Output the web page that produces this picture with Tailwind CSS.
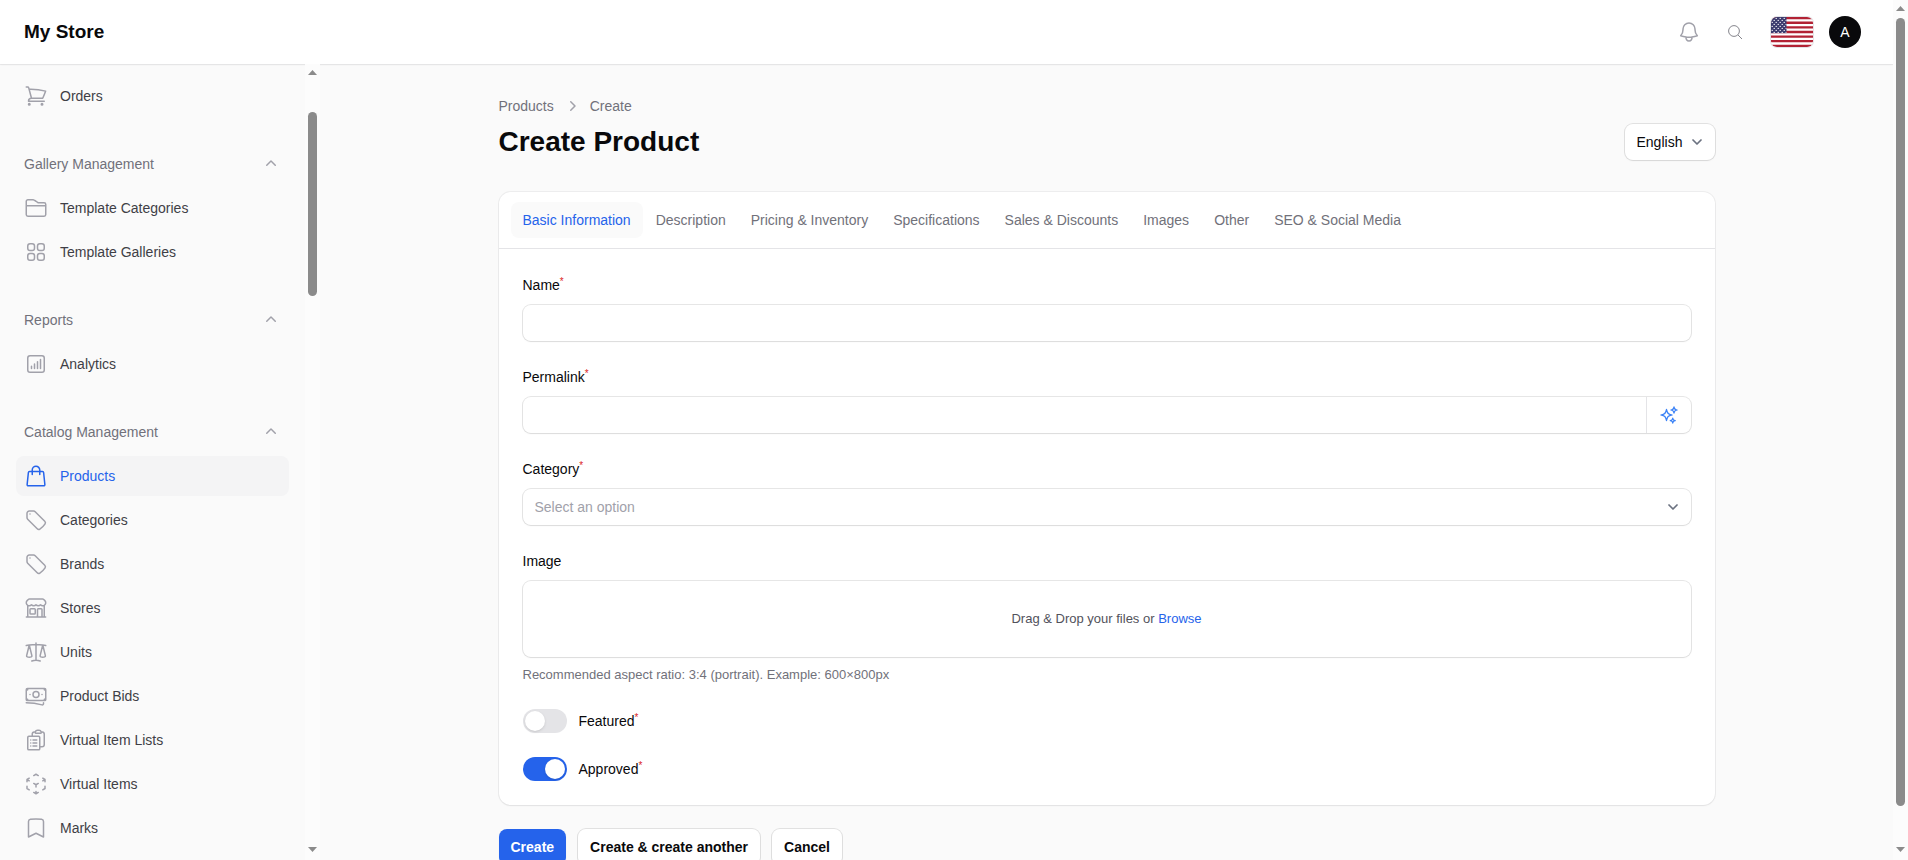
<!DOCTYPE html>
<html lang="en">
<head>
    <meta charset="UTF-8">
    <meta name="viewport" content="width=device-width, initial-scale=1.0">
    <title>Create Product - My Store</title>
    <script src="https://cdn.jsdelivr.net/npm/@tailwindcss/browser@4"></script>
    <style>
        body {
            font-family: 'Liberation Sans', Arial, sans-serif;
        }
    </style>
</head>
<body class="flex h-screen overflow-hidden bg-[#fafafa] text-sm text-[#09090b]">
    <div class="flex min-w-0 flex-1 flex-col">

        <!-- Topbar -->
        <header class="flex h-16 shrink-0 items-center justify-between bg-white pr-8 pl-6 shadow-xs ring-1 ring-[#09090b]/5">
            <a href="#" class="text-[19px] font-bold">My Store</a>
            <div class="flex items-center gap-4">
                <div class="flex items-center gap-1.5">
                    <button type="button" aria-label="Notifications" class="flex size-10 items-center justify-center text-[#a1a1aa]">
                        <svg class="size-6" fill="none" viewBox="0 0 24 24" stroke-width="1.5" stroke="currentColor" stroke-linecap="round" stroke-linejoin="round"><path d="M14.857 17.082a23.848 23.848 0 0 0 5.454-1.31A8.967 8.967 0 0 1 18 9.75V9A6 6 0 0 0 6 9v.75a8.967 8.967 0 0 1-2.312 6.022c1.733.64 3.56 1.085 5.455 1.31m5.714 0a24.255 24.255 0 0 1-5.714 0m5.714 0a3 3 0 1 1-5.714 0"/></svg>
                    </button>
                    <button type="button" aria-label="Search" class="flex size-10 items-center justify-center text-[#85858c]">
                        <svg class="size-4" fill="none" viewBox="0 0 16 16" stroke="currentColor"><circle cx="7" cy="7" r="5.4"/><path d="m11 11 4 4"/></svg>
                    </button>
                </div>
                <button type="button" aria-label="Language" class="h-[30px] w-[42px] overflow-hidden rounded-md ring-1 ring-[#e4e4e7]">
                    <svg class="size-full" viewBox="0 0 42 30" preserveAspectRatio="none">
                        <defs>
                            <pattern id="stars" width="4" height="4" patternUnits="userSpaceOnUse">
                                <circle cx="1.2" cy="1.4" r=".65" fill="#fff"/>
                                <circle cx="3.2" cy="3.4" r=".65" fill="#fff"/>
                            </pattern>
                        </defs>
                        <rect width="42" height="30" fill="#fff"/>
                        <path d="M0 1.15h42M0 5.77h42M0 10.38h42M0 15h42M0 19.6h42M0 24.2h42M0 28.85h42" stroke="#b22234" stroke-width="2.3"/>
                        <rect width="15.5" height="16.1" fill="#3c3b6e"/>
                        <rect width="15.5" height="16.1" fill="url(#stars)"/>
                    </svg>
                </button>
                <button type="button" aria-label="Account" class="size-8 rounded-full bg-[#09090b] text-white">A</button>
            </div>
        </header>

        <div class="flex min-h-0 flex-1">

            <!-- Sidebar -->
            <aside class="z-10 flex w-80 shrink-0">
                <nav class="flex min-w-0 flex-1 flex-col gap-7 overflow-hidden px-4 pt-3 text-[#3f3f46]">
                    <ul class="flex flex-col gap-1">
                        <li><a href="#" class="flex h-10 items-center gap-3 rounded-lg px-2">
                            <svg class="size-6 text-[#a1a1aa]" fill="none" viewBox="0 0 24 24" stroke-width="1.5" stroke="currentColor" stroke-linecap="round" stroke-linejoin="round"><path d="M2.25 3h1.386c.51 0 .955.343 1.087.835l.383 1.437M7.5 14.25a3 3 0 0 0-3 3h15.75m-12.75-3h11.218c1.121-2.3 2.1-4.684 2.924-7.138a60.114 60.114 0 0 0-16.536-1.84M7.5 14.25 5.106 5.272M6 20.25a.75.75 0 1 1-1.5 0 .75.75 0 0 1 1.5 0Zm12.75 0a.75.75 0 1 1-1.5 0 .75.75 0 0 1 1.5 0Z"/></svg>
                            Orders</a></li>
                    </ul>

                    <div class="flex flex-col gap-1">
                        <button type="button" class="flex h-10 items-center justify-between px-2 text-[#71717a]">
                            Gallery Management
                            <svg class="size-5 text-[#a1a1aa]" viewBox="0 0 20 20" fill="currentColor"><path d="M9.47 6.47a.75.75 0 0 1 1.06 0l4.25 4.25a.75.75 0 1 1-1.06 1.06L10 8.06l-3.72 3.72a.75.75 0 0 1-1.06-1.06l4.25-4.25Z"/></svg>
                        </button>
                        <ul class="flex flex-col gap-1">
                            <li><a href="#" class="flex h-10 items-center gap-3 rounded-lg px-2">
                                <svg class="size-6 text-[#a1a1aa]" fill="none" viewBox="0 0 24 24" stroke-width="1.5" stroke="currentColor" stroke-linecap="round" stroke-linejoin="round"><path d="M2.25 9.75h19.5M12 5.25 10.2 4.1a2 2 0 0 0-1.1-.35H3.9A1.65 1.65 0 0 0 2.25 5.4v13.2c0 .9.75 1.65 1.65 1.65h16.2c.9 0 1.65-.75 1.65-1.65V8.4c0-.9-.75-1.65-1.65-1.65h-5.3a2 2 0 0 1-1.2-.4L12 5.25Z"/></svg>
                                Template Categories</a></li>
                            <li><a href="#" class="flex h-10 items-center gap-3 rounded-lg px-2">
                                <svg class="size-6 text-[#a1a1aa]" fill="none" viewBox="0 0 24 24" stroke-width="1.5" stroke="currentColor" stroke-linecap="round" stroke-linejoin="round"><path d="M3.75 6A2.25 2.25 0 0 1 6 3.75h2.25A2.25 2.25 0 0 1 10.5 6v2.25a2.25 2.25 0 0 1-2.25 2.25H6a2.25 2.25 0 0 1-2.25-2.25V6ZM3.75 15.75A2.25 2.25 0 0 1 6 13.5h2.25a2.25 2.25 0 0 1 2.25 2.25V18a2.25 2.25 0 0 1-2.25 2.25H6A2.25 2.25 0 0 1 3.75 18v-2.25ZM13.5 6a2.25 2.25 0 0 1 2.25-2.25H18A2.25 2.25 0 0 1 20.25 6v2.25A2.25 2.25 0 0 1 18 10.5h-2.25a2.25 2.25 0 0 1-2.25-2.25V6ZM13.5 15.75a2.25 2.25 0 0 1 2.25-2.25H18a2.25 2.25 0 0 1 2.25 2.25V18A2.25 2.25 0 0 1 18 20.25h-2.25A2.25 2.25 0 0 1 13.5 18v-2.25Z"/></svg>
                                Template Galleries</a></li>
                        </ul>
                    </div>

                    <div class="flex flex-col gap-1">
                        <button type="button" class="flex h-10 items-center justify-between px-2 text-[#71717a]">
                            Reports
                            <svg class="size-5 text-[#a1a1aa]" viewBox="0 0 20 20" fill="currentColor"><path d="M9.47 6.47a.75.75 0 0 1 1.06 0l4.25 4.25a.75.75 0 1 1-1.06 1.06L10 8.06l-3.72 3.72a.75.75 0 0 1-1.06-1.06l4.25-4.25Z"/></svg>
                        </button>
                        <ul class="flex flex-col gap-1">
                            <li><a href="#" class="flex h-10 items-center gap-3 rounded-lg px-2">
                                <svg class="size-6 text-[#a1a1aa]" fill="none" viewBox="0 0 24 24" stroke-width="1.5" stroke="currentColor" stroke-linecap="round" stroke-linejoin="round"><path d="M7.5 14.25v2.25m3-4.5v4.5m3-6.75v6.75m3-9v9M6 20.25h12A2.25 2.25 0 0 0 20.25 18V6A2.25 2.25 0 0 0 18 3.75H6A2.25 2.25 0 0 0 3.75 6v12A2.25 2.25 0 0 0 6 20.25Z"/></svg>
                                Analytics</a></li>
                        </ul>
                    </div>

                    <div class="flex flex-col gap-1">
                        <button type="button" class="flex h-10 items-center justify-between px-2 text-[#71717a]">
                            Catalog Management
                            <svg class="size-5 text-[#a1a1aa]" viewBox="0 0 20 20" fill="currentColor"><path d="M9.47 6.47a.75.75 0 0 1 1.06 0l4.25 4.25a.75.75 0 1 1-1.06 1.06L10 8.06l-3.72 3.72a.75.75 0 0 1-1.06-1.06l4.25-4.25Z"/></svg>
                        </button>
                        <ul class="flex flex-col gap-1">
                            <li><a href="#" class="flex h-10 items-center gap-3 rounded-lg bg-[#f4f4f5] px-2 text-[#2563eb]">
                                <svg class="size-6" fill="none" viewBox="0 0 24 24" stroke-width="1.5" stroke="currentColor" stroke-linecap="round" stroke-linejoin="round"><path d="M15.75 10.5V6a3.75 3.75 0 1 0-7.5 0v4.5m11.356-1.993 1.263 12c.07.665-.45 1.243-1.119 1.243H4.25a1.125 1.125 0 0 1-1.12-1.243l1.264-12A1.125 1.125 0 0 1 5.513 7.5h12.974c.576 0 1.059.435 1.119 1.007Z"/></svg>
                                Products</a></li>
                            <li><a href="#" class="flex h-10 items-center gap-3 rounded-lg px-2">
                                <svg class="size-6 text-[#a1a1aa]" fill="none" viewBox="0 0 24 24" stroke-width="1.5" stroke="currentColor" stroke-linecap="round" stroke-linejoin="round"><path d="M9.568 3H5.25A2.25 2.25 0 0 0 3 5.25v4.318c0 .597.237 1.17.659 1.591l9.581 9.581c.699.699 1.78.872 2.607.33a18.095 18.095 0 0 0 5.223-5.223c.542-.827.369-1.908-.33-2.607L11.16 3.66A2.25 2.25 0 0 0 9.568 3Z"/><path d="M6 6h.008v.008H6V6Z"/></svg>
                                Categories</a></li>
                            <li><a href="#" class="flex h-10 items-center gap-3 rounded-lg px-2">
                                <svg class="size-6 text-[#a1a1aa]" fill="none" viewBox="0 0 24 24" stroke-width="1.5" stroke="currentColor" stroke-linecap="round" stroke-linejoin="round"><path d="M9.568 3H5.25A2.25 2.25 0 0 0 3 5.25v4.318c0 .597.237 1.17.659 1.591l9.581 9.581c.699.699 1.78.872 2.607.33a18.095 18.095 0 0 0 5.223-5.223c.542-.827.369-1.908-.33-2.607L11.16 3.66A2.25 2.25 0 0 0 9.568 3Z"/><path d="M6 6h.008v.008H6V6Z"/></svg>
                                Brands</a></li>
                            <li><a href="#" class="flex h-10 items-center gap-3 rounded-lg px-2">
                                <svg class="size-6 text-[#a1a1aa]" fill="none" viewBox="0 0 24 24" stroke-width="1.5" stroke="currentColor" stroke-linecap="round" stroke-linejoin="round"><path d="M13.5 21v-7.5a.75.75 0 0 1 .75-.75h3a.75.75 0 0 1 .75.75V21m-4.5 0H2.36m11.14 0H18m0 0h3.64m-1.39 0V9.349M3.75 21V9.349m0 0a3.001 3.001 0 0 0 3.75-.615A2.993 2.993 0 0 0 9.75 9.75c.896 0 1.7-.393 2.25-1.016a2.993 2.993 0 0 0 2.25 1.016c.896 0 1.7-.393 2.25-1.015a3.001 3.001 0 0 0 3.75.614m-16.5 0a3.004 3.004 0 0 1-.621-4.72l1.189-1.19A1.5 1.5 0 0 1 5.378 3h13.243a1.5 1.5 0 0 1 1.06.44l1.19 1.189a3 3 0 0 1-.621 4.72M6.75 18h3.75a.75.75 0 0 0 .75-.75V13.5a.75.75 0 0 0-.75-.75H6.75a.75.75 0 0 0-.75.75v3.75c0 .414.336.75.75.75Z"/></svg>
                                Stores</a></li>
                            <li><a href="#" class="flex h-10 items-center gap-3 rounded-lg px-2">
                                <svg class="size-6 text-[#a1a1aa]" fill="none" viewBox="0 0 24 24" stroke-width="1.5" stroke="currentColor" stroke-linecap="round" stroke-linejoin="round"><path d="M12 3v17.25m0 0c-1.472 0-2.882.265-4.185.75M12 20.25c1.472 0 2.882.265 4.185.75M18.75 4.97A48.416 48.416 0 0 0 12 4.5c-2.291 0-4.545.16-6.75.47m13.5 0c1.01.143 2.01.317 3 .52m-3-.52 2.62 10.726c.122.499-.106 1.028-.589 1.202a5.988 5.988 0 0 1-2.031.352 5.988 5.988 0 0 1-2.031-.352c-.483-.174-.711-.703-.59-1.202L18.75 4.971Zm-16.5.52c.99-.203 1.99-.377 3-.52m0 0 2.62 10.726c.122.499-.106 1.028-.589 1.202a5.989 5.989 0 0 1-2.031.352 5.989 5.989 0 0 1-2.031-.352c-.483-.174-.711-.703-.59-1.202L5.25 4.971Z"/></svg>
                                Units</a></li>
                            <li><a href="#" class="flex h-10 items-center gap-3 rounded-lg px-2">
                                <svg class="size-6 text-[#a1a1aa]" fill="none" viewBox="0 0 24 24" stroke-width="1.5" stroke="currentColor" stroke-linecap="round" stroke-linejoin="round"><path d="M2.25 18.75a60.07 60.07 0 0 1 15.797 2.101c.727.198 1.453-.342 1.453-1.096V18.75M3.75 4.5v.75A.75.75 0 0 1 3 6h-.75m0 0v-.375c0-.621.504-1.125 1.125-1.125H20.25M2.25 6v9m18-10.5v.75c0 .414.336.75.75.75h.75m-1.5-1.5h.375c.621 0 1.125.504 1.125 1.125v9.75c0 .621-.504 1.125-1.125 1.125h-.375m1.5-1.5H21a.75.75 0 0 0-.75.75v.75m0 0H3.75m0 0h-.375a1.125 1.125 0 0 1-1.125-1.125V15m1.5 1.5v-.75A.75.75 0 0 0 3 15h-.75M15 10.5a3 3 0 1 1-6 0 3 3 0 0 1 6 0Zm3 0h.008v.008H18V10.5Zm-12 0h.008v.008H6V10.5Z"/></svg>
                                Product Bids</a></li>
                            <li><a href="#" class="flex h-10 items-center gap-3 rounded-lg px-2">
                                <svg class="size-6 text-[#a1a1aa]" fill="none" viewBox="0 0 24 24" stroke-width="1.5" stroke="currentColor" stroke-linecap="round" stroke-linejoin="round"><path d="M9 12h3.75M9 15h3.75M9 18h3.75m3 .75H18a2.25 2.25 0 0 0 2.25-2.25V6.108c0-1.135-.845-2.098-1.976-2.192a48.424 48.424 0 0 0-1.123-.08m-5.801 0c-.065.21-.1.433-.1.664 0 .414.336.75.75.75h4.5a.75.75 0 0 0 .75-.75 2.25 2.25 0 0 0-.1-.664m-5.8 0A2.251 2.251 0 0 1 13.5 2.25H15c1.012 0 1.867.668 2.15 1.586m-5.8 0c-.376.023-.75.05-1.124.08C9.095 4.01 8.25 4.973 8.25 6.108V8.25m0 0H4.875c-.621 0-1.125.504-1.125 1.125v11.25c0 .621.504 1.125 1.125 1.125h9.75c.621 0 1.125-.504 1.125-1.125V9.375c0-.621-.504-1.125-1.125-1.125H8.25ZM6.75 12h.008v.008H6.75V12Zm0 3h.008v.008H6.75V15Zm0 3h.008v.008H6.75V18Z"/></svg>
                                Virtual Item Lists</a></li>
                            <li><a href="#" class="flex h-10 items-center gap-3 rounded-lg px-2">
                                <svg class="size-6 text-[#a1a1aa]" fill="none" viewBox="0 0 24 24" stroke-width="1.5" stroke="currentColor" stroke-linecap="round" stroke-linejoin="round"><path d="m21 7.5-2.25-1.313M21 7.5v2.25m0-2.25-2.25 1.313M3 7.5l2.25-1.313M3 7.5l2.25 1.313M3 7.5v2.25m9 3 2.25-1.313M12 12.75l-2.25-1.313M12 12.75V15m0 6.75 2.25-1.313M12 21.75V19.5m0 2.25-2.25-1.313m0-16.875L12 2.25l2.25 1.313M21 14.25v2.25l-2.25 1.313m-13.5 0L3 16.5v-2.25"/></svg>
                                Virtual Items</a></li>
                            <li><a href="#" class="flex h-10 items-center gap-3 rounded-lg px-2">
                                <svg class="size-6 text-[#a1a1aa]" fill="none" viewBox="0 0 24 24" stroke-width="1.5" stroke="currentColor" stroke-linecap="round" stroke-linejoin="round"><path d="M17.593 3.322c1.1.128 1.907 1.077 1.907 2.185V21L12 17.25 4.5 21V5.507c0-1.108.806-2.057 1.907-2.185a48.507 48.507 0 0 1 11.186 0Z"/></svg>
                                Marks</a></li>
                        </ul>
                    </div>
                </nav>

                <!-- Sidebar scrollbar -->
                <div class="flex w-[15px] flex-col items-center justify-between bg-[#fcfcfc] pt-1.5 pb-2 text-[#8b8b8b]">
                    <svg class="w-[9px] shrink-0" viewBox="0 0 9 5" fill="currentColor"><path d="M4.5 0 9 5H0Z"/></svg>
                    <div class="flex w-[9px] flex-1 flex-col pt-[37px]">
                        <div class="h-1/4 rounded-full bg-[#8b8b8b]"></div>
                    </div>
                    <svg class="w-[9px] shrink-0" viewBox="0 0 9 5" fill="currentColor"><path d="M0 0h9L4.5 5Z"/></svg>
                </div>
            </aside>

            <!-- Page -->
            <main class="mx-auto flex w-full max-w-7xl min-w-0 flex-col gap-8 overflow-hidden px-8 py-8">
                <div class="flex items-end justify-between">
                    <div>
                        <nav class="mb-2 flex items-center gap-2 text-[#71717a]">
                            <a href="#">Products</a>
                            <svg class="size-5 text-[#a1a1aa]" viewBox="0 0 20 20" fill="currentColor"><path d="M8.22 5.22a.75.75 0 0 1 1.06 0l4.25 4.25a.75.75 0 0 1 0 1.06l-4.25 4.25a.75.75 0 0 1-1.06-1.06L11.94 10 8.22 6.28a.75.75 0 0 1 0-1.06Z"/></svg>
                            <a href="#">Create</a>
                        </nav>
                        <h1 class="text-[28px] leading-9 font-bold">Create Product</h1>
                    </div>
                    <div class="relative">
                        <select aria-label="Language of the content" class="h-9 w-[90px] appearance-none rounded-lg bg-white pl-3 shadow-xs ring-1 ring-[#09090b]/10">
                            <option>English</option>
                        </select>
                        <svg class="pointer-events-none absolute top-2 right-2 size-5 text-[#6b7280]" fill="none" viewBox="0 0 20 20" stroke="currentColor" stroke-width="1.75" stroke-linecap="round" stroke-linejoin="round"><path d="m6 8 4 4 4-4"/></svg>
                    </div>
                </div>

                <form class="flex flex-col gap-6">
                    <div class="rounded-xl bg-white shadow-xs ring-1 ring-[#09090b]/5">
                        <div role="tablist" class="flex gap-px border-b border-[#e4e4e7] px-3 py-2.5 text-[#71717a]">
                            <button type="button" role="tab" aria-selected="true" class="h-9 rounded-lg bg-[#fafafa] px-3 text-[#2563eb]">Basic Information</button>
                            <button type="button" role="tab" class="h-9 rounded-lg px-3">Description</button>
                            <button type="button" role="tab" class="h-9 rounded-lg px-3">Pricing &amp; Inventory</button>
                            <button type="button" role="tab" class="h-9 rounded-lg px-3">Specifications</button>
                            <button type="button" role="tab" class="h-9 rounded-lg px-3">Sales &amp; Discounts</button>
                            <button type="button" role="tab" class="h-9 rounded-lg px-3">Images</button>
                            <button type="button" role="tab" class="h-9 rounded-lg px-3">Other</button>
                            <button type="button" role="tab" class="h-9 rounded-lg px-3">SEO &amp; Social Media</button>
                        </div>

                        <div class="flex flex-col gap-6 p-6">
                            <div class="flex flex-col gap-2">
                                <label for="name" class="leading-6">Name<sup class="text-[10px] text-[#dc2626]">*</sup></label>
                                <input type="text" id="name" required class="h-9 w-full rounded-lg px-3 shadow-xs ring-1 ring-[#09090b]/10">
                            </div>

                            <div class="flex flex-col gap-2">
                                <label for="permalink" class="leading-6">Permalink<sup class="text-[10px] text-[#dc2626]">*</sup></label>
                                <div class="flex h-9 rounded-lg shadow-xs ring-1 ring-[#09090b]/10">
                                    <input type="text" id="permalink" required class="min-w-0 flex-1 rounded-l-lg px-3">
                                    <button type="button" aria-label="Generate permalink" class="border-l border-[#e4e4e7] px-3 text-[#3b82f6]">
                                        <svg class="size-5" fill="none" viewBox="0 0 24 24" stroke-width="1.5" stroke="currentColor" stroke-linecap="round" stroke-linejoin="round"><path d="M9.813 15.904 9 18.75l-.813-2.846a4.5 4.5 0 0 0-3.09-3.09L2.25 12l2.846-.813a4.5 4.5 0 0 0 3.09-3.09L9 5.25l.813 2.846a4.5 4.5 0 0 0 3.09 3.09L15.75 12l-2.846.813a4.5 4.5 0 0 0-3.09 3.09ZM18.259 8.715 18 9.75l-.259-1.035a3.375 3.375 0 0 0-2.455-2.456L14.25 6l1.036-.259a3.375 3.375 0 0 0 2.455-2.456L18 2.25l.259 1.035a3.375 3.375 0 0 0 2.456 2.456L21.75 6l-1.035.259a3.375 3.375 0 0 0-2.456 2.456ZM16.894 20.567 16.5 21.75l-.394-1.183a2.25 2.25 0 0 0-1.423-1.423L13.5 18.75l1.183-.394a2.25 2.25 0 0 0 1.423-1.423l.394-1.183.394 1.183a2.25 2.25 0 0 0 1.423 1.423l1.183.394-1.183.394a2.25 2.25 0 0 0-1.423 1.423Z"/></svg>
                                    </button>
                                </div>
                            </div>

                            <div class="flex flex-col gap-2">
                                <label for="category" class="leading-6">Category<sup class="text-[10px] text-[#dc2626]">*</sup></label>
                                <div class="relative">
                                    <select id="category" required class="h-9 w-full appearance-none rounded-lg bg-white px-3 text-[#a1a1aa] shadow-xs ring-1 ring-[#09090b]/10">
                                        <option value="">Select an option</option>
                                    </select>
                                    <svg class="pointer-events-none absolute top-2 right-2 size-5 text-[#6b7280]" fill="none" viewBox="0 0 20 20" stroke="currentColor" stroke-width="1.75" stroke-linecap="round" stroke-linejoin="round"><path d="m6 8 4 4 4-4"/></svg>
                                </div>
                            </div>

                            <div class="flex flex-col gap-2">
                                <label for="image" class="leading-6">Image</label>
                                <label for="image" class="flex h-[76px] items-center justify-center rounded-lg text-[13px] text-[#52525b] shadow-xs ring-1 ring-[#09090b]/10">
                                    <span>Drag &amp; Drop your files or <span class="text-[#2563eb]">Browse</span></span>
                                    <input type="file" id="image" class="sr-only">
                                </label>
                                <p class="text-[13px] leading-5 text-[#71717a]">Recommended aspect ratio: 3:4 (portrait). Example: 600×800px</p>
                            </div>

                            <label class="flex items-center gap-3 leading-6">
                                <input type="checkbox" role="switch" class="h-6 w-11 appearance-none rounded-full bg-[#e4e4e7] p-0.5 before:block before:size-5 before:rounded-full before:bg-white before:shadow checked:bg-[#2563eb] checked:before:ml-5">
                                <span>Featured<sup class="text-[10px] text-[#dc2626]">*</sup></span>
                            </label>
                            <label class="flex items-center gap-3 leading-6">
                                <input type="checkbox" role="switch" checked class="h-6 w-11 appearance-none rounded-full bg-[#e4e4e7] p-0.5 before:block before:size-5 before:rounded-full before:bg-white before:shadow checked:bg-[#2563eb] checked:before:ml-5">
                                <span>Approved<sup class="text-[10px] text-[#dc2626]">*</sup></span>
                            </label>
                        </div>
                    </div>

                    <div class="flex gap-3 font-bold">
                        <button type="submit" class="h-9 rounded-lg bg-[#2563eb] px-3 text-white shadow-xs">Create</button>
                        <button type="button" class="h-9 rounded-lg bg-white px-3 shadow-xs ring-1 ring-[#09090b]/10">Create &amp; create another</button>
                        <button type="button" class="h-9 rounded-lg bg-white px-3 shadow-xs ring-1 ring-[#09090b]/10">Cancel</button>
                    </div>
                </form>
            </main>
        </div>
    </div>

    <!-- Page scrollbar -->
    <div class="z-10 flex w-[15px] shrink-0 flex-col items-center justify-between bg-[#fcfcfc] pt-1.5 pb-2 text-[#8b8b8b]">
        <svg class="w-[9px] shrink-0" viewBox="0 0 9 5" fill="currentColor"><path d="M4.5 0 9 5H0Z"/></svg>
        <div class="flex w-[9px] flex-1 flex-col pt-[7px]">
            <div class="h-[95%] rounded-full bg-[#8b8b8b]"></div>
        </div>
        <svg class="w-[9px] shrink-0" viewBox="0 0 9 5" fill="currentColor"><path d="M0 0h9L4.5 5Z"/></svg>
    </div>
</body>
</html>
